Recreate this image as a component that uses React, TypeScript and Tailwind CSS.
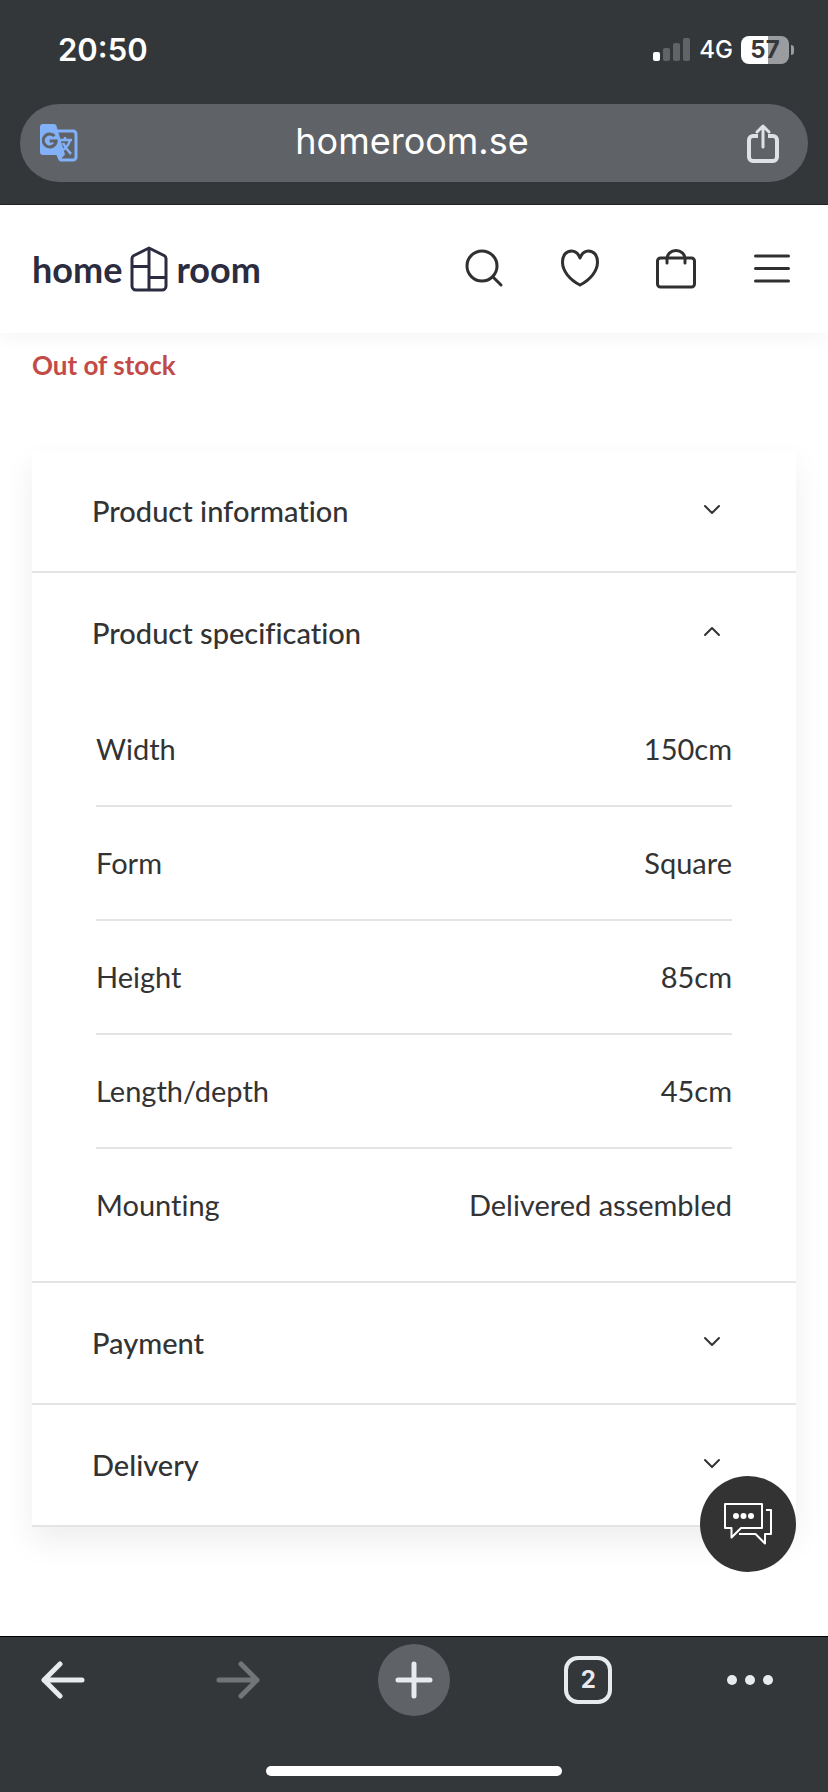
import { useState, type ReactNode } from "react";
import { clsx } from "clsx";

const SPECS = [
  { label: "Width", value: "150cm" },
  { label: "Form", value: "Square" },
  { label: "Height", value: "85cm" },
  { label: "Length/depth", value: "45cm" },
  { label: "Mounting", value: "Delivered assembled" },
];

function StatusBar() {
  return (
    <div className="flex h-[104px] items-start justify-between pt-8 pr-[34px] pl-[58px] text-white">
      <span className="text-[31px] leading-9 font-semibold">20:50</span>
      <div className="flex h-9 items-center gap-2">
        <svg width="38" height="24" viewBox="0 0 38 24" aria-hidden="true">
          <rect x="0" y="14" width="7" height="9" rx="2" fill="#fff" />
          <rect x="10" y="10" width="7" height="13" rx="2" fill="#626366" />
          <rect x="20" y="5" width="7" height="18" rx="2" fill="#626366" />
          <rect x="30" y="0" width="7" height="23" rx="2" fill="#626366" />
        </svg>
        <span className="text-[24px] leading-7 font-medium">4G</span>
        <div className="flex items-center gap-0.5">
          <div className="flex h-7 w-12 items-center justify-center rounded-lg bg-[linear-gradient(90deg,#fff_57%,#9b9ca0_57%)] text-[24px] leading-7 font-bold text-[#35373b]">
            57
          </div>
          <div className="h-2.5 w-[3px] rounded-r-full bg-[#9b9ca0]" />
        </div>
      </div>
    </div>
  );
}

function TranslateIcon() {
  return (
    <svg width="40" height="40" viewBox="0 0 40 40" fill="none" aria-hidden="true">
      <path d="M17 8h17a3 3 0 0 1 3 3v23a3 3 0 0 1-3 3H22l-3-6" stroke="#82b1f8" strokeWidth="3" />
      <path d="M4 1h11c1.200 0 2 .7 2.400 1.800L26 31.500 20 38l-2.500-6H4a3 3 0 0 1-3-3V4a3 3 0 0 1 3-3Z" fill="#82b1f8" />
      <path d="M15.500 13a6.500 6.500 0 1 0 1.700 5h-6.500" stroke="#5f6367" strokeWidth="3" />
      <path d="M21 17h12M26 14v3M31 17c-1 4-4 8-7 10M24 20c2 4 5 8 8 11" stroke="#82b1f8" strokeWidth="2.500" />
    </svg>
  );
}

function ShareIcon() {
  return (
    <svg width="36" height="40" viewBox="0 0 36 40" fill="none" stroke="#dfe1e5" strokeWidth="4" strokeLinecap="round" strokeLinejoin="round" aria-hidden="true">
      <path d="M13 13H8a4 4 0 0 0-4 4v17a4 4 0 0 0 4 4h20a4 4 0 0 0 4-4V17a4 4 0 0 0-4-4h-5" strokeLinecap="butt" />
      <path d="M18 24V4M12 9l6-6 6 6" strokeWidth="3" />
    </svg>
  );
}

function Logo() {
  return (
    <a href="#" aria-label="homeroom" className="flex items-center gap-2 text-[36px] leading-10 font-bold text-[#2c2c40]">
      <span>home</span>
      <svg width="38" height="46" viewBox="0 0 38 46" fill="none" stroke="currentColor" strokeWidth="3" strokeLinejoin="round" aria-hidden="true">
        <path d="M19 2 34 9.500c1.300.700 2 1.700 2 3V40a4 4 0 0 1-4 4H6a4 4 0 0 1-4-4V12.500c0-1.300.7-2.300 2-3L19 2Z" />
        <path d="M19 2v42M2 20.500h17M19 31.500h17" />
      </svg>
      <span>room</span>
    </a>
  );
}

function HeaderButton({ label, children }: { label: string; children: ReactNode }) {
  return (
    <button type="button" aria-label={label} className="size-12">
      <svg width="48" height="48" viewBox="0 0 48 48" fill="none" stroke="#303030" strokeWidth="3" strokeLinecap="round" strokeLinejoin="round">
        {children}
      </svg>
    </button>
  );
}

function SiteHeader() {
  return (
    <header className="flex h-32 items-center justify-between bg-white px-8 shadow-[0_6px_16px_rgba(0,0,0,0.04)]">
      <Logo />
      <nav className="flex gap-12">
        <HeaderButton label="Search">
          <circle cx="22" cy="21" r="15" />
          <path d="m33 32 8 8" />
        </HeaderButton>
        <HeaderButton label="Favourites">
          <path d="M24 13c-1.500-4.200-4.500-7-8.500-7C10 6 6.500 10.500 6.500 17c0 9 7 17.500 17.500 23 10.500-5.500 17.500-14 17.500-23 0-6.500-3.500-11-9-11-4 0-7 2.800-8.500 7Z" />
        </HeaderButton>
        <HeaderButton label="Shopping bag">
          <rect x="5.500" y="13" width="37" height="29" rx="3" />
          <path d="M15 18v-4c0-5 4-8.500 9-8.500s9 3.500 9 8.500v4" />
        </HeaderButton>
        <HeaderButton label="Menu">
          <path d="M7.500 11h33M7.500 23.500h33M7.500 36h33" />
        </HeaderButton>
      </nav>
    </header>
  );
}

interface SectionProps {
  title: string;
  defaultOpen?: boolean;
  children?: ReactNode;
}

function Section({ title, defaultOpen = false, children }: SectionProps) {
  const [open, setOpen] = useState(defaultOpen);
  return (
    <section className="border-b-2 border-[#e4e4e4]">
      <h2>
        <button
          type="button"
          aria-expanded={open}
          onClick={() => setOpen(!open)}
          className="flex h-[120px] w-full items-center justify-between pr-[74px] pl-[60px] text-left text-[29px] leading-9 font-medium"
        >
          {title}
          <svg
            width="20"
            height="20"
            viewBox="0 0 20 20"
            fill="none"
            stroke="currentColor"
            strokeWidth="2"
            strokeLinecap="round"
            strokeLinejoin="round"
            aria-hidden="true"
          >
            <path d={open ? "m3 12 7-7 7 7" : "m3 5 7 7 7-7"} />
          </svg>
        </button>
      </h2>
      {open && children}
    </section>
  );
}

function SpecTable() {
  return (
    <div className="px-16 pb-5">
      <table className="w-full border-separate border-spacing-0 text-[29px] leading-9">
        <tbody>
          {SPECS.map((spec, i) => {
            const cell = i < SPECS.length - 1 ? "h-[114px] border-b-2 border-[#e4e4e4]" : "h-28";
            return (
              <tr key={spec.label}>
                <th scope="row" className={clsx(cell, "text-left font-normal")}>{spec.label}</th>
                <td className={clsx(cell, "text-right")}>{spec.value}</td>
              </tr>
            );
          })}
        </tbody>
      </table>
    </div>
  );
}

function ChatButton() {
  return (
    <button type="button" aria-label="Chat" className="absolute right-8 bottom-16 flex size-24 items-center justify-center rounded-full bg-[#333]">
      <svg width="48" height="44" viewBox="0 0 48 44" fill="none" stroke="#fff" strokeWidth="2" strokeLinejoin="round" aria-hidden="true">
        <path d="M1 2h37v24H17L7.500 35.500V26H1V2Z" />
        <path d="M42 8h5v24h-6v9.500L31.500 32H15" />
        <g fill="#fff" stroke="none">
          <circle cx="12" cy="14" r="3" />
          <circle cx="19.500" cy="14" r="3" />
          <circle cx="27" cy="14" r="3" />
        </g>
      </svg>
    </button>
  );
}

function BrowserToolbar() {
  return (
    <footer className="flex h-[156px] flex-col items-center justify-between border-t border-black bg-[#343739] pt-[7px] pb-4 text-[#e8eaed]">
      <div className="flex w-full items-center justify-between pr-[55px] pl-7">
        <button type="button" aria-label="Back" className="flex size-[72px] items-center justify-center">
          <svg width="46" height="38" viewBox="0 0 46 38" fill="none" stroke="currentColor" strokeWidth="5" strokeLinecap="round" strokeLinejoin="round">
            <path d="M41 19H3M19 3 3 19l16 16" />
          </svg>
        </button>
        <button type="button" aria-label="Forward" disabled className="flex size-[72px] items-center justify-center text-[#737478]">
          <svg width="46" height="38" viewBox="0 0 46 38" fill="none" stroke="currentColor" strokeWidth="5" strokeLinecap="round" strokeLinejoin="round">
            <path d="M3 19h38M25 3l16 16-16 16" />
          </svg>
        </button>
        <button type="button" aria-label="New tab" className="flex size-[72px] items-center justify-center rounded-full bg-[#5f6367]">
          <svg width="38" height="38" viewBox="0 0 38 38" fill="none" stroke="currentColor" strokeWidth="5" strokeLinecap="round">
            <path d="M19 3v32M3 19h32" />
          </svg>
        </button>
        <button type="button" aria-label="2 open tabs" className="flex size-[72px] items-center justify-center">
          <span className="flex size-12 items-center justify-center rounded-[14px] border-4 border-[#e8eaed] text-[24px] leading-7 font-bold">2</span>
        </button>
        <button type="button" aria-label="More" className="flex h-[72px] w-[46px] items-center justify-center">
          <svg width="46" height="10" viewBox="0 0 46 10" fill="currentColor">
            <circle cx="5" cy="5" r="5" />
            <circle cx="23" cy="5" r="5" />
            <circle cx="41" cy="5" r="5" />
          </svg>
        </button>
      </div>
      <div className="h-2.5 w-[296px] rounded-full bg-white" />
    </footer>
  );
}

export default function App() {
  return (
    <div className="flex min-h-screen flex-col bg-white font-['Inter',sans-serif]">
      <div className="border-b border-[#222427] bg-[#343739] pb-[22px]">
        <StatusBar />
        <div className="mx-5 flex h-[78px] items-center justify-between rounded-full bg-[#5f6367] px-[19px]">
          <button type="button" aria-label="Translate">
            <TranslateIcon />
          </button>
          <span className="pb-1 text-[36px] leading-10 text-white">homeroom.se</span>
          <button type="button" aria-label="Share" className="pr-2">
            <ShareIcon />
          </button>
        </div>
      </div>
      <div className="relative flex-1 font-['Lato',sans-serif] text-[#333] [font-variant-ligatures:none]">
        <SiteHeader />
        <main className="px-8 pt-4 pb-[109px]">
          <p className="text-[26px] leading-8 font-bold text-[#c24a47]">Out of stock</p>
          <div className="mt-[70px] bg-white shadow-[0_14px_30px_rgba(0,0,0,0.07)]">
            <Section title="Product information" />
            <Section title="Product specification" defaultOpen>
              <SpecTable />
            </Section>
            <Section title="Payment" />
            <Section title="Delivery" />
          </div>
        </main>
        <ChatButton />
      </div>
      <BrowserToolbar />
    </div>
  );
}
